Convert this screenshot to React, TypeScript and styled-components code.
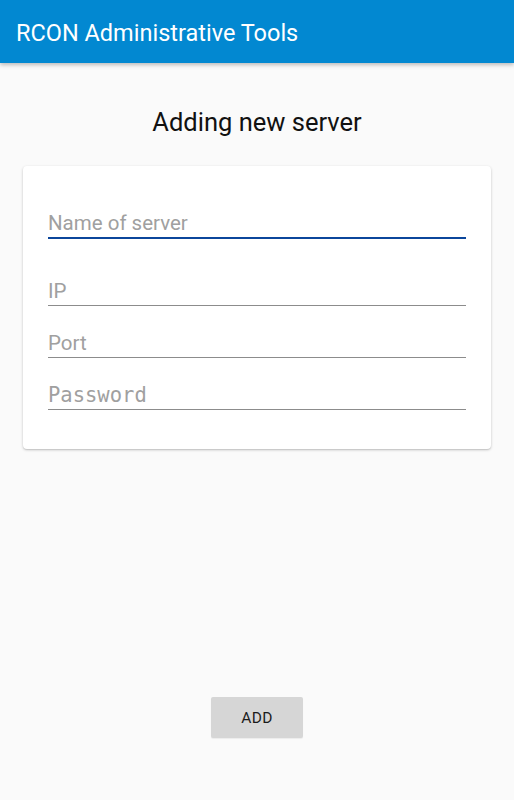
import styled, { createGlobalStyle } from "styled-components";

const GlobalStyle = createGlobalStyle`
  html, body {
    margin: 0;
    padding: 0;
    background: #fafafa;
    font-family: Roboto, "Noto Sans", sans-serif;
  }
`;

const Page = styled.div`
  min-height: 100vh;
  display: flex;
  flex-direction: column;
`;

const AppBar = styled.header`
  height: 63px;
  background: #0288d1;
  display: flex;
  align-items: center;
  padding: 0 16px;
  box-shadow: 0 2px 4px rgba(0, 0, 0, 0.25);
  position: relative;
  z-index: 1;
`;

const AppTitle = styled.h1`
  margin: 0;
  color: #ffffff;
  font-size: 23.5px;
  font-weight: 400;
  padding-top: 2px;
`;

const Main = styled.main`
  flex: 1;
  display: flex;
  flex-direction: column;
  align-items: center;
  padding: 43px 23px 0;
`;

const Heading = styled.h2`
  margin: 0 0 27px;
  font-size: 25.5px;
  line-height: 33px;
  font-weight: 400;
  color: #111;
`;

const Card = styled.div`
  align-self: stretch;
  background: #fff;
  border-radius: 4px;
  box-shadow: 0 1px 3px rgba(0, 0, 0, 0.2), 0 1px 1px rgba(0, 0, 0, 0.08);
  padding: 43px 25px 39px;
  display: flex;
  flex-direction: column;
`;

const Input = styled.input<{ $focused?: boolean; $mono?: boolean; $gap?: number }>`
  display: block;
  width: 100%;
  box-sizing: border-box;
  height: ${(p) => (p.$focused ? 30 : 29)}px;
  margin: ${(p) => p.$gap ?? 0}px 0 0;
  padding: 0;
  border: none;
  border-bottom: ${(p) => (p.$focused ? "2px solid #0b469b" : "1px solid #8c8c8c")};
  background: transparent;
  outline: none;
  font-family: ${(p) =>
    p.$mono ? '"DejaVu Sans Mono", "Liberation Mono", monospace' : 'Roboto, "Noto Sans", sans-serif'};
  font-size: ${(p) => (p.$mono ? 20.5 : 20.5)}px;
  color: #222;

  &::placeholder {
    color: #a0a0a0;
  }
`;

const Footer = styled.div`
  display: flex;
  justify-content: center;
  padding: 40px 0 62px;
`;

const AddButton = styled.button`
  width: 92px;
  height: 41px;
  border: none;
  border-radius: 2px;
  background: #d6d6d6;
  color: #1c1c1c;
  font-family: Roboto, "Noto Sans", sans-serif;
  font-size: 15.5px;
  letter-spacing: 0.3px;
  box-shadow: 0 1px 1px rgba(0, 0, 0, 0.06);
`;

const App = () => {
  return (
    <Page>
      <GlobalStyle />
      <AppBar>
        <AppTitle>RCON Administrative Tools</AppTitle>
      </AppBar>
      <Main>
        <Heading>Adding new server</Heading>
        <Card>
          <Input $focused placeholder="Name of server" />
          <Input $gap={38} placeholder="IP" />
          <Input $gap={23} placeholder="Port" />
          <Input $gap={23} $mono type="password" placeholder="Password" />
        </Card>
      </Main>
      <Footer>
        <AddButton>ADD</AddButton>
      </Footer>
    </Page>
  );
};

export default App;
